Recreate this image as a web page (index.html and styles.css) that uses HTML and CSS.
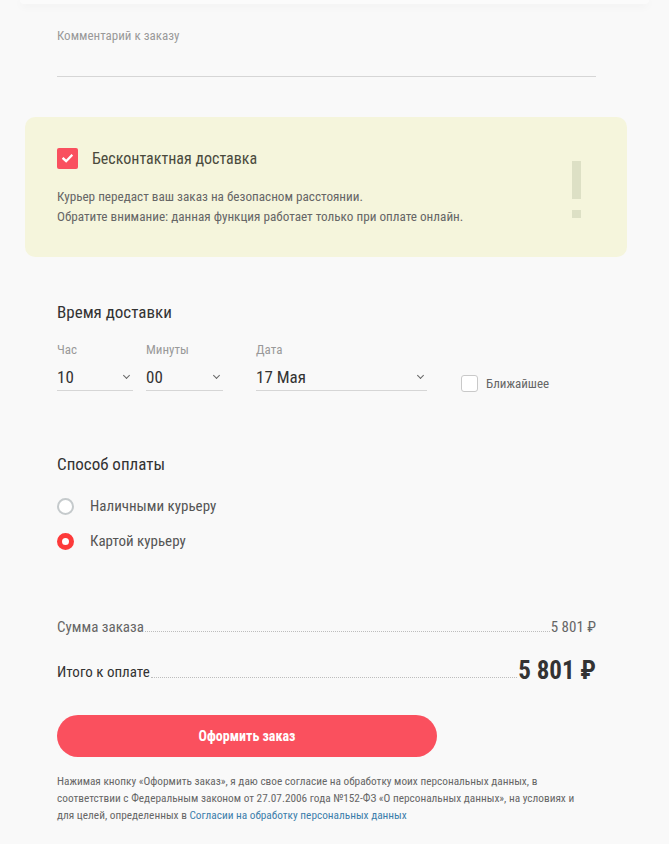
FILE: index.html
```html
<!DOCTYPE html>
<html lang="ru">
<head>
<meta charset="utf-8">
<title>Оформление заказа</title>
<link rel="stylesheet" href="styles.css">
</head>
<body>
<div class="page">
  <div class="top-card"></div>

  <div class="field comment">
    <div class="field-label">Комментарий к заказу</div>
  </div>

  <div class="notice">
    <div class="notice-head">
      <span class="check checked">
        <svg viewBox="0 0 12 10" width="11" height="9"><path d="M1.5 5.2 L4.5 8 L10.5 1.8" fill="none" stroke="#fff" stroke-width="2.6" stroke-linecap="square"/></svg>
      </span>
      <span class="notice-title">Бесконтактная доставка</span>
    </div>
    <p class="notice-text">Курьер передаст ваш заказ на безопасном расстоянии.<br>Обратите внимание: данная функция работает только при оплате онлайн.</p>
    <div class="excl"><span class="excl-bar"></span><span class="excl-dot"></span></div>
  </div>

  <h2 class="section-title time-title">Время доставки</h2>
  <div class="time-row">
    <div class="select s-hour">
      <div class="select-label">Час</div>
      <div class="select-box"><span>10</span><span class="chev"></span></div>
    </div>
    <div class="select s-min">
      <div class="select-label">Минуты</div>
      <div class="select-box"><span>00</span><span class="chev"></span></div>
    </div>
    <div class="select s-date">
      <div class="select-label">Дата</div>
      <div class="select-box"><span>17 Мая</span><span class="chev"></span></div>
    </div>
    <label class="nearest"><span class="check empty"></span><span>Ближайшее</span></label>
  </div>

  <h2 class="section-title pay-title">Способ оплаты</h2>
  <div class="radios">
    <div class="radio-row"><span class="radio"></span><span>Наличными курьеру</span></div>
    <div class="radio-row"><span class="radio on"></span><span>Картой курьеру</span></div>
  </div>

  <div class="totals">
    <div class="total-row sum"><span class="t-label">Сумма заказа</span><span class="dots"></span><span class="t-val">5 801 ₽</span></div>
    <div class="total-row grand"><span class="t-label">Итого к оплате</span><span class="dots"></span><span class="t-val">5 801 ₽</span></div>
  </div>

  <button class="submit">Оформить заказ</button>

  <p class="legal">Нажимая кнопку «Оформить заказ», я даю свое согласие на обработку моих персональных данных, в соответствии с Федеральным законом от 27.07.2006 года №152-ФЗ «О персональных данных», на условиях и для целей, определенных в <a href="#">Согласии на обработку персональных данных</a></p>
</div>
</body>
</html>
```

FILE: styles.css
```css
* { box-sizing: border-box; }
html, body { margin: 0; padding: 0; }
body {
  background: #f9f9f9;
  font-family: "Roboto Condensed", "Liberation Sans Narrow", "DejaVu Sans Condensed", Roboto, sans-serif;
  font-stretch: condensed;
  color: #333;
  width: 669px;
  height: 844px;
  overflow: hidden;
}
.page { position: relative; }
.top-card {
  height: 4px;
  margin: 0 20px;
  background: #fbfbfb;
  box-shadow: 0 2px 8px rgba(0,0,0,0.05);
  border-radius: 0 0 20px 20px;
}
.field.comment {
  margin: 24px 73px 0 57px;
  height: 49px;
  border-bottom: 1px solid #d6d6d6;
}
.field-label { font-size: 13px; color: #999; line-height: 16px; }

.notice {
  position: relative;
  margin: 40px 42px 0 25px;
  height: 140px;
  background: #f5f5dc;
  border-radius: 10px;
  padding: 30px 32px 0 32px;
}
.notice-head { display: flex; align-items: center; gap: 14px; height: 22px; }
.check {
  display: inline-flex; align-items: center; justify-content: center;
  width: 21px; height: 21px; border-radius: 2px;
}
.check.checked { background: #f9505f; }
.notice-title { font-size: 16px; color: #4a4a3c; }
.notice-text { margin: 18px 0 0; font-size: 13.2px; line-height: 20px; color: #666; }
.excl {
  position: absolute; right: 46px; top: 44px; width: 9px;
  display: flex; flex-direction: column; gap: 11px;
}
.excl-bar { display: block; height: 38px; background: #dde0c5; }
.excl-dot { display: block; height: 8px; background: #dde0c5; }

.section-title { margin: 0; font-weight: 400; font-size: 17px; color: #333; line-height: 20px; padding-left: 57px; }
.time-title { margin-top: 45px; }

.time-row { display: flex; align-items: flex-end; padding-left: 57px; margin-top: 20px; }
.select-label { font-size: 13px; color: #999; line-height: 16px; }
.select-box {
  display: flex; justify-content: space-between; align-items: center;
  height: 28px; border-bottom: 1px solid #d6d6d6;
  font-size: 17px; color: #333;
  margin-top: 5px;
}
.s-hour { width: 76px; }
.s-min { width: 77px; margin-left: 13px; }
.s-date { width: 171px; margin-left: 33px; }
.chev {
  width: 5px; height: 5px; margin-right: 4px; margin-top: -3px;
  border-right: 1px solid #666; border-bottom: 1px solid #666;
  transform: rotate(45deg);
}
.nearest {
  display: flex; align-items: center; gap: 8px;
  margin-left: 34px; margin-bottom: -1px;
  font-size: 13px; color: #666;
}
.check.empty { width: 17px; height: 17px; border: 1px solid #c9c9c9; border-radius: 3px; background: #fff; }

.pay-title { margin-top: 63px; }
.radios { padding-left: 57px; margin-top: 23px; display: flex; flex-direction: column; gap: 17px; }
.radio-row { display: flex; align-items: center; gap: 16px; font-size: 15px; color: #555; height: 18px; }
.radio { width: 17px; height: 17px; border-radius: 50%; border: 2px solid #c5cacc; background: #fff; }
.radio.on { border: 5px solid #fd3a3a; }

.totals { margin: 66px 73px 0 57px; }
.total-row { display: flex; align-items: flex-end; }
.total-row .dots { flex: 1; border-bottom: 1px dotted #bdbdbd; margin: 0 1px 4px; }
.sum { font-size: 15px; color: #666; height: 20px; }
.sum .t-val { font-size: 15px; color: #666; }
.grand { margin-top: 21px; font-size: 15px; color: #333; }
.grand .t-label { line-height: 20px; }
.grand .t-val { font-size: 25px; font-weight: 700; line-height: 28px; color: #333; margin-bottom: -3px; }

.submit {
  display: block; margin: 33px 0 0 57px;
  width: 380px; height: 42px; border: 0; border-radius: 21px;
  background: #fa505e; color: #fff;
  font-family: inherit; font-stretch: condensed; font-size: 14px; font-weight: 700;
}
.legal { margin: 16px 0 0 57px; width: 533px; font-size: 11.3px; line-height: 17px; color: #666; }
.legal a { color: #3c7eab; text-decoration: none; }
```
